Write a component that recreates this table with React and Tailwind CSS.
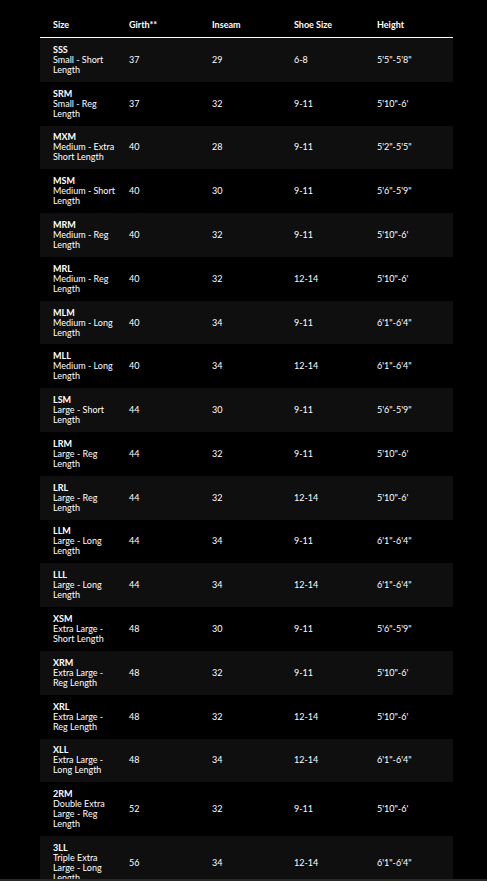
const rows = [
  { code: "SSS", desc: ["Small - Short", "Length"], girth: "37", inseam: "29", shoe: "6-8", height: "5'5\"-5'8\"" },
  { code: "SRM", desc: ["Small - Reg", "Length"], girth: "37", inseam: "32", shoe: "9-11", height: "5'10\"-6'" },
  { code: "MXM", desc: ["Medium - Extra", "Short Length"], girth: "40", inseam: "28", shoe: "9-11", height: "5'2\"-5'5\"" },
  { code: "MSM", desc: ["Medium - Short", "Length"], girth: "40", inseam: "30", shoe: "9-11", height: "5'6\"-5'9\"" },
  { code: "MRM", desc: ["Medium - Reg", "Length"], girth: "40", inseam: "32", shoe: "9-11", height: "5'10\"-6'" },
  { code: "MRL", desc: ["Medium - Reg", "Length"], girth: "40", inseam: "32", shoe: "12-14", height: "5'10\"-6'" },
  { code: "MLM", desc: ["Medium - Long", "Length"], girth: "40", inseam: "34", shoe: "9-11", height: "6'1\"-6'4\"" },
  { code: "MLL", desc: ["Medium - Long", "Length"], girth: "40", inseam: "34", shoe: "12-14", height: "6'1\"-6'4\"" },
  { code: "LSM", desc: ["Large - Short", "Length"], girth: "44", inseam: "30", shoe: "9-11", height: "5'6\"-5'9\"" },
  { code: "LRM", desc: ["Large - Reg", "Length"], girth: "44", inseam: "32", shoe: "9-11", height: "5'10\"-6'" },
  { code: "LRL", desc: ["Large - Reg", "Length"], girth: "44", inseam: "32", shoe: "12-14", height: "5'10\"-6'" },
  { code: "LLM", desc: ["Large - Long", "Length"], girth: "44", inseam: "34", shoe: "9-11", height: "6'1\"-6'4\"" },
  { code: "LLL", desc: ["Large - Long", "Length"], girth: "44", inseam: "34", shoe: "12-14", height: "6'1\"-6'4\"" },
  { code: "XSM", desc: ["Extra Large -", "Short Length"], girth: "48", inseam: "30", shoe: "9-11", height: "5'6\"-5'9\"" },
  { code: "XRM", desc: ["Extra Large -", "Reg Length"], girth: "48", inseam: "32", shoe: "9-11", height: "5'10\"-6'" },
  { code: "XRL", desc: ["Extra Large -", "Reg Length"], girth: "48", inseam: "32", shoe: "12-14", height: "5'10\"-6'" },
  { code: "XLL", desc: ["Extra Large -", "Long Length"], girth: "48", inseam: "34", shoe: "12-14", height: "6'1\"-6'4\"" },
  { code: "2RM", desc: ["Double Extra", "Large - Reg", "Length"], girth: "52", inseam: "32", shoe: "9-11", height: "5'10\"-6'" },
  { code: "3LL", desc: ["Triple Extra", "Large - Long", "Length"], girth: "56", inseam: "34", shoe: "12-14", height: "6'1\"-6'4\"" },
];

const cols = "grid grid-cols-[76px_83px_82px_83px_1fr]";

export default function App() {
  return (
    <div
      className="h-[881px] bg-black text-white flex flex-col overflow-hidden"
      style={{ fontFamily: "Lato, 'Noto Sans', sans-serif" }}
    >
      <div className="flex-1 overflow-hidden">
        <div className="ml-[40px] w-[413px] text-[9px] leading-[10px]">
          {/* header */}
          <div className={`${cols} pt-[20px] pb-[7px] border-b border-white font-bold`}>
            <div className="pl-[13px]">Size</div>
            <div className="pl-[13px]">Girth**</div>
            <div className="pl-[13px]">Inseam</div>
            <div className="pl-[13px]">Shoe Size</div>
            <div className="pl-[13px]">Height</div>
          </div>

          {rows.map((r, i) => (
            <div
              key={r.code}
              className={`${cols} items-center py-[6.9px] ${
                i % 2 === 0 ? "bg-[#0f0f0f]" : "bg-black"
              }`}
            >
              <div className="pl-[13px] whitespace-nowrap">
                <div className="font-bold">{r.code}</div>
                {r.desc.map((line) => (
                  <div key={line}>{line}</div>
                ))}
              </div>
              <div className="pl-[13px]">{r.girth}</div>
              <div className="pl-[13px]">{r.inseam}</div>
              <div className="pl-[13px]">{r.shoe}</div>
              <div className="pl-[13px]">{r.height}</div>
            </div>
          ))}
        </div>
      </div>
      <div className="h-[2px] bg-[#2a2823]" />
    </div>
  );
}
